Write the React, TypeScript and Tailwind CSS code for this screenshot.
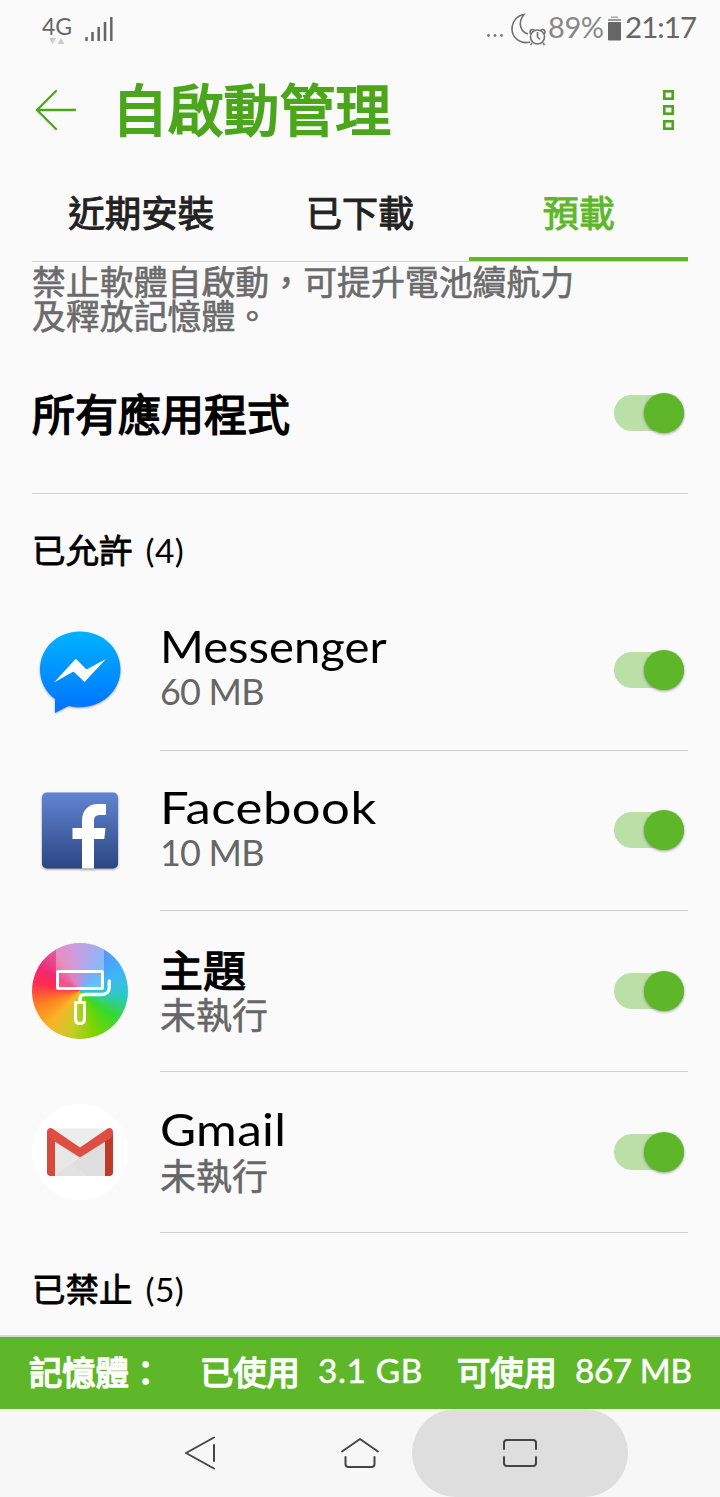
import { useState } from "react";
import clsx from "clsx";

const tabs = [
  { label: "近期安裝", style: "text-[36.5px]" },
  { label: "已下載", style: "text-[36px]" },
  { label: "預載", style: "text-[36px]" },
];

const apps = [
  {
    name: "Messenger",
    status: "60 MB",
    icon: <MessengerIcon />,
    rowStyle: "pb-[4px]",
    nameStyle: "text-[45px] origin-left scale-x-[1.05]",
    statusStyle: "leading-[42px] tracking-[-0.8px]",
  },
  {
    name: "Facebook",
    status: "10 MB",
    icon: <FacebookIcon />,
    rowStyle: "pb-[4px]",
    nameStyle: "text-[45px] origin-left scale-x-[1.13] tracking-[0.4px]",
    statusStyle: "leading-[42px] tracking-[-0.8px]",
  },
  {
    name: "主題",
    status: "未執行",
    icon: <ThemeIcon />,
    rowStyle: "pt-[1px]",
    nameStyle: "text-[43px] [-webkit-text-stroke:1.3px]",
    statusStyle: "leading-[42px] [-webkit-text-stroke:0.5px]",
  },
  {
    name: "Gmail",
    status: "未執行",
    icon: <GmailIcon />,
    rowStyle: "pt-[2px]",
    nameStyle: "text-[45px] origin-left scale-x-[1.1] tracking-[0.3px]",
    statusStyle: "leading-[46px] [-webkit-text-stroke:0.5px]",
  },
];

function MessengerIcon() {
  return (
    <svg
      viewBox="0 0 96 96"
      className="size-24 drop-shadow-[0_1px_1px_rgba(0,0,0,0.3)]"
    >
      <defs>
        <linearGradient id="messenger" x1="0" y1="0" x2="0" y2="1">
          <stop offset="0" stopColor="#00b2ff" />
          <stop offset="0.9" stopColor="#0078ff" />
        </linearGradient>
      </defs>
      <path
        d="M48 9.5C25.5 9.5 8 26 8 47.5C8 60 14 70.5 23 77V91L36.5 84C40 85 44 85.3 48 85.3C70.5 85.3 88.5 68.5 88.5 47.5C88.5 26 70.5 9.5 48 9.5Z"
        fill="url(#messenger)"
      />
      <path d="M22 60.5L43.8 36.7L54.5 47.5L74 37L52.5 60L41.5 49.5Z" fill="#fff" />
    </svg>
  );
}

function FacebookIcon() {
  return (
    <svg
      viewBox="0 0 96 96"
      className="size-24 drop-shadow-[0_1px_1px_rgba(0,0,0,0.4)]"
    >
      <defs>
        <linearGradient id="facebook" x1="0" y1="0" x2="0" y2="1">
          <stop offset="0" stopColor="#6285d2" />
          <stop offset="1" stopColor="#2b4682" />
        </linearGradient>
      </defs>
      <rect x="10" y="9.5" width="76" height="76" rx="5" fill="url(#facebook)" />
      <path
        d="M50 85.5V56H40.5V45H50V38C50 27 56.5 21 66 21H74V32H68.5C63.5 32 62 34 62 38.5V45H73.5L72.3 56H62V85.5Z"
        fill="#fff"
      />
    </svg>
  );
}

function ThemeIcon() {
  return (
    <div className="mb-px size-24 overflow-hidden rounded-full bg-[conic-gradient(#a878d8_0deg,#4f9cf8_38deg,#3fb4f8_65deg,#2cc8c8_95deg,#38d82c_128deg,#7cd400_160deg,#c4cc28_190deg,#f8b428_222deg,#ff8420_250deg,#ff2c50_280deg,#f02870_300deg,#dc60a8_330deg,#a878d8_360deg)]">
      <svg viewBox="0 0 96 96" className="size-24" fill="none" stroke="#fff">
        <rect x="24" y="0" width="48" height="28" fill="#fff" fillOpacity="0.3" stroke="none" />
        <rect x="25.5" y="28.5" width="45" height="17" rx="1" fill="#fff" fillOpacity="0.2" strokeWidth="3" />
        <path d="M77.3 38V44C77.3 49 74 51.5 70 51.5H53C50 51.5 48 53 48 56V58" strokeWidth="3.3" strokeLinecap="round" />
        <path d="M43.5 59.5H52.5V76C52.5 79 50.5 80.5 48 80.5C45.5 80.5 43.5 79 43.5 76Z" strokeWidth="3" />
      </svg>
    </div>
  );
}

function GmailIcon() {
  return (
    <svg viewBox="0 0 96 96" className="size-24">
      <circle cx="48" cy="48" r="48" fill="#fff" />
      <path d="M18 24.5H78V72H18Z" fill="#ececec" />
      <path d="M22 72L48 49L74 72Z" fill="#e2e2e2" />
      <path d="M38 58L48 50L73 35V72H56Z" fill="#dedede" />
      <path d="M22 34L48 54L23 71Z" fill="#e7e7e7" />
      <path d="M15 28H23V72H18.5C16.5 72 15 70.5 15 68.5Z" fill="#d64a3e" />
      <path d="M73 28H81V68.5C81 70.5 79.5 72 77.5 72H73Z" fill="#bf3a2b" />
      <path
        d="M15 28C15 24.5 18.5 23 21 25L48 43.5L75 25C77.5 23 81 24.5 81 28C81 31 80 33 78 34.5L48 53.5L18 34.5C16 33 15 31 15 28Z"
        fill="#df4e42"
      />
    </svg>
  );
}

function Switch() {
  const [on, setOn] = useState(true);
  return (
    <button
      type="button"
      role="switch"
      aria-checked={on}
      onClick={() => setOn(!on)}
      className={clsx(
        "mr-1 flex h-9 w-[70px] shrink-0 items-center rounded-full",
        on ? "justify-end bg-[#bbe0a7]" : "justify-start bg-[#d0d0d0]"
      )}
    >
      <span
        className={clsx(
          "size-10 shrink-0 rounded-full shadow-[0_1px_3px_rgba(0,0,0,0.4)]",
          on ? "bg-[#5eb729]" : "bg-[#f1f1f1]"
        )}
      />
    </button>
  );
}

function StatusBar() {
  return (
    <div className="flex h-14 shrink-0 items-center justify-between pr-[23px] pl-[42px] text-[#666]">
      <svg viewBox="0 0 74 40" className="h-10 w-[74px]">
        <text x="0" y="27" fontSize="23" textLength="30" fill="#666">
          4G
        </text>
        <path d="M7 30H14L10.5 36ZM15.5 36H22.5L19 30Z" fill="#ccc" />
        <path
          d="M44.5 29V33M50.5 24V33M56.7 19V33M63 14V33M69.3 9V33"
          stroke="#666"
          strokeWidth="2.5"
        />
      </svg>
      <svg viewBox="0 0 212 40" className="h-10 w-[212px]">
        <g fill="#777">
          <circle cx="3.5" cy="27.5" r="1.4" />
          <circle cx="10" cy="27.5" r="1.4" />
          <circle cx="16.5" cy="27.5" r="1.4" />
        </g>
        <g fill="none" stroke="#707070" strokeWidth="1.6">
          <path d="M45 34C36 36.5 27 30 27 21C27 13 33 7 39 6.5C32 15 36 24 43 26" />
          <circle cx="52.5" cy="29" r="7" />
          <path d="M52.5 24V29L55 31.5M47 35L45.5 37M58 35L59.5 37M45.5 26C44 22 47 20.5 49.5 22.5M59.5 26C61 22 58 20.5 55.5 22.5" />
        </g>
        <text x="63" y="29.5" fontSize="29" textLength="56" fill="#888">
          89%
        </text>
        <rect x="126" y="8.5" width="7" height="1.5" fill="#aaa" />
        <rect x="123" y="11" width="13" height="2" fill="#999" />
        <rect x="123" y="14" width="13" height="18.5" rx="1" fill="#666" />
        <text x="140" y="29.5" fontSize="29.5" textLength="72" fill="#666">
          21:17
        </text>
      </svg>
    </div>
  );
}

export default function App() {
  const [activeTab, setActiveTab] = useState(2);

  return (
    <main className="flex h-[1497px] w-[720px] flex-col overflow-hidden bg-[#fafafa] font-[Lato,'Noto_Sans_CJK_TC',sans-serif] text-black">
      <StatusBar />

      {/* Title bar */}
      <header className="flex h-[108px] shrink-0 items-center pr-[46px] pl-[35px] text-[#4ca61c]">
        <svg
          viewBox="0 0 42 42"
          className="size-[42px]"
          fill="none"
          stroke="currentColor"
          strokeWidth="2.3"
          strokeLinecap="round"
          strokeLinejoin="round"
        >
          <path d="M21 2L2 21L21 40M2 21H40" />
        </svg>
        <h1 className="ml-[35px] flex-1 text-[55.8px] leading-[60px] [-webkit-text-stroke:2px]">
          自啟動管理
        </h1>
        <svg
          viewBox="0 0 11 40"
          className="h-10 w-[11px]"
          fill="none"
          stroke="currentColor"
          strokeWidth="2.6"
        >
          <rect x="1.3" y="1.3" width="8.4" height="7.4" />
          <rect x="1.3" y="16.3" width="8.4" height="7.4" />
          <rect x="1.3" y="31.3" width="8.4" height="7.4" />
        </svg>
      </header>

      {/* Tabs */}
      <nav className="mx-8 flex h-[98px] shrink-0 border-b border-[#cfcfcf]">
        {tabs.map((tab, i) => (
          <button
            key={tab.label}
            type="button"
            onClick={() => setActiveTab(i)}
            className={clsx(
              "flex-1 border-b-4 pt-[4px] leading-[88px] [-webkit-text-stroke:1px]",
              tab.style,
              activeTab === i
                ? "border-[#5eb729] text-[#5eb729]"
                : "border-transparent text-[#222]"
            )}
          >
            {tab.label}
          </button>
        ))}
      </nav>

      <section className="flex-1 px-8">
        <p className="h-[71px] pt-[3px] text-[33.9px] leading-[34px] text-[#6b6b6b] [-webkit-text-stroke:0.6px]">
          禁止軟體自啟動，可提升電池續航力
          <br />
          及釋放記憶體。
        </p>

        <div className="flex h-[161px] items-center justify-between border-b border-[#cfcfcf]">
          <h2 className="pt-1 text-[43px] leading-[50px] [-webkit-text-stroke:1.5px]">
            所有應用程式
          </h2>
          <Switch />
        </div>

        <h3 className="h-24 text-[33.5px] leading-[113px] [-webkit-text-stroke:0.8px]">
          已允許
          <span className="ml-[13px] tracking-[0.5px] [-webkit-text-stroke:0px]">(4)</span>
        </h3>

        {apps.map((app) => (
          <div key={app.name} className="flex h-[160.67px] items-center">
            {app.icon}
            <div className="ml-8 flex h-full flex-1 items-center justify-between border-b border-[#cfcfcf]">
              <div className={app.rowStyle}>
                <div className={clsx("leading-[47px]", app.nameStyle)}>{app.name}</div>
                <div className={clsx("text-[36px] text-[#666]", app.statusStyle)}>
                  {app.status}
                </div>
              </div>
              <Switch />
            </div>
          </div>
        ))}

        <h3 className="h-[101px] text-[33.5px] leading-[112px] [-webkit-text-stroke:0.8px]">
          已禁止
          <span className="ml-[13px] tracking-[0.5px] [-webkit-text-stroke:0px]">(5)</span>
        </h3>
      </section>

      {/* Memory usage */}
      <footer className="flex h-[74px] shrink-0 items-center border-t-2 border-[#d8d8d8] bg-[#5eb729] pl-[29px] text-[33.3px] whitespace-nowrap text-white [-webkit-text-stroke:1.5px]">
        <span className="w-[171px]">記憶體：</span>
        <span className="w-[118px]">已使用</span>
        <span className="w-[139px] pb-1 tracking-[0.7px] [-webkit-text-stroke:0.5px]">3.1 GB</span>
        <span className="w-[118px]">可使用</span>
        <span className="pb-1 tracking-[-0.4px] [-webkit-text-stroke:0.5px]">867 MB</span>
      </footer>

      <div className="flex h-[88px] shrink-0 items-center bg-[#f7f7f7] pl-[180px] text-[#444]">
        <svg
          viewBox="0 0 40 40"
          className="size-10"
          fill="none"
          stroke="currentColor"
          strokeWidth="2"
          strokeLinecap="round"
          strokeLinejoin="round"
        >
          <path d="M34 4.5L6 20L34 35.5M34 12V28" />
        </svg>
        <svg
          viewBox="0 0 40 40"
          className="ml-[120px] size-10"
          fill="none"
          stroke="currentColor"
          strokeWidth="2"
          strokeLinecap="round"
          strokeLinejoin="round"
        >
          <path d="M2 18.5L20 6L38 18.5M5.5 24V31C5.5 33 6.5 34 8.5 34H31.5C33.5 34 34.5 33 34.5 31V24" />
        </svg>
        <div className="ml-8 flex h-[88px] w-[216px] items-center justify-center rounded-full bg-[#dedede]">
          <svg
            viewBox="0 0 40 40"
            className="size-10"
            fill="none"
            stroke="currentColor"
            strokeWidth="2"
            strokeLinecap="round"
          >
            <path d="M4 16V10C4 8 5 7 7 7H33C35 7 36 8 36 10V16M4 24V30C4 32 5 33 7 33H33C35 33 36 32 36 30V24" />
          </svg>
        </div>
      </div>
    </main>
  );
}
